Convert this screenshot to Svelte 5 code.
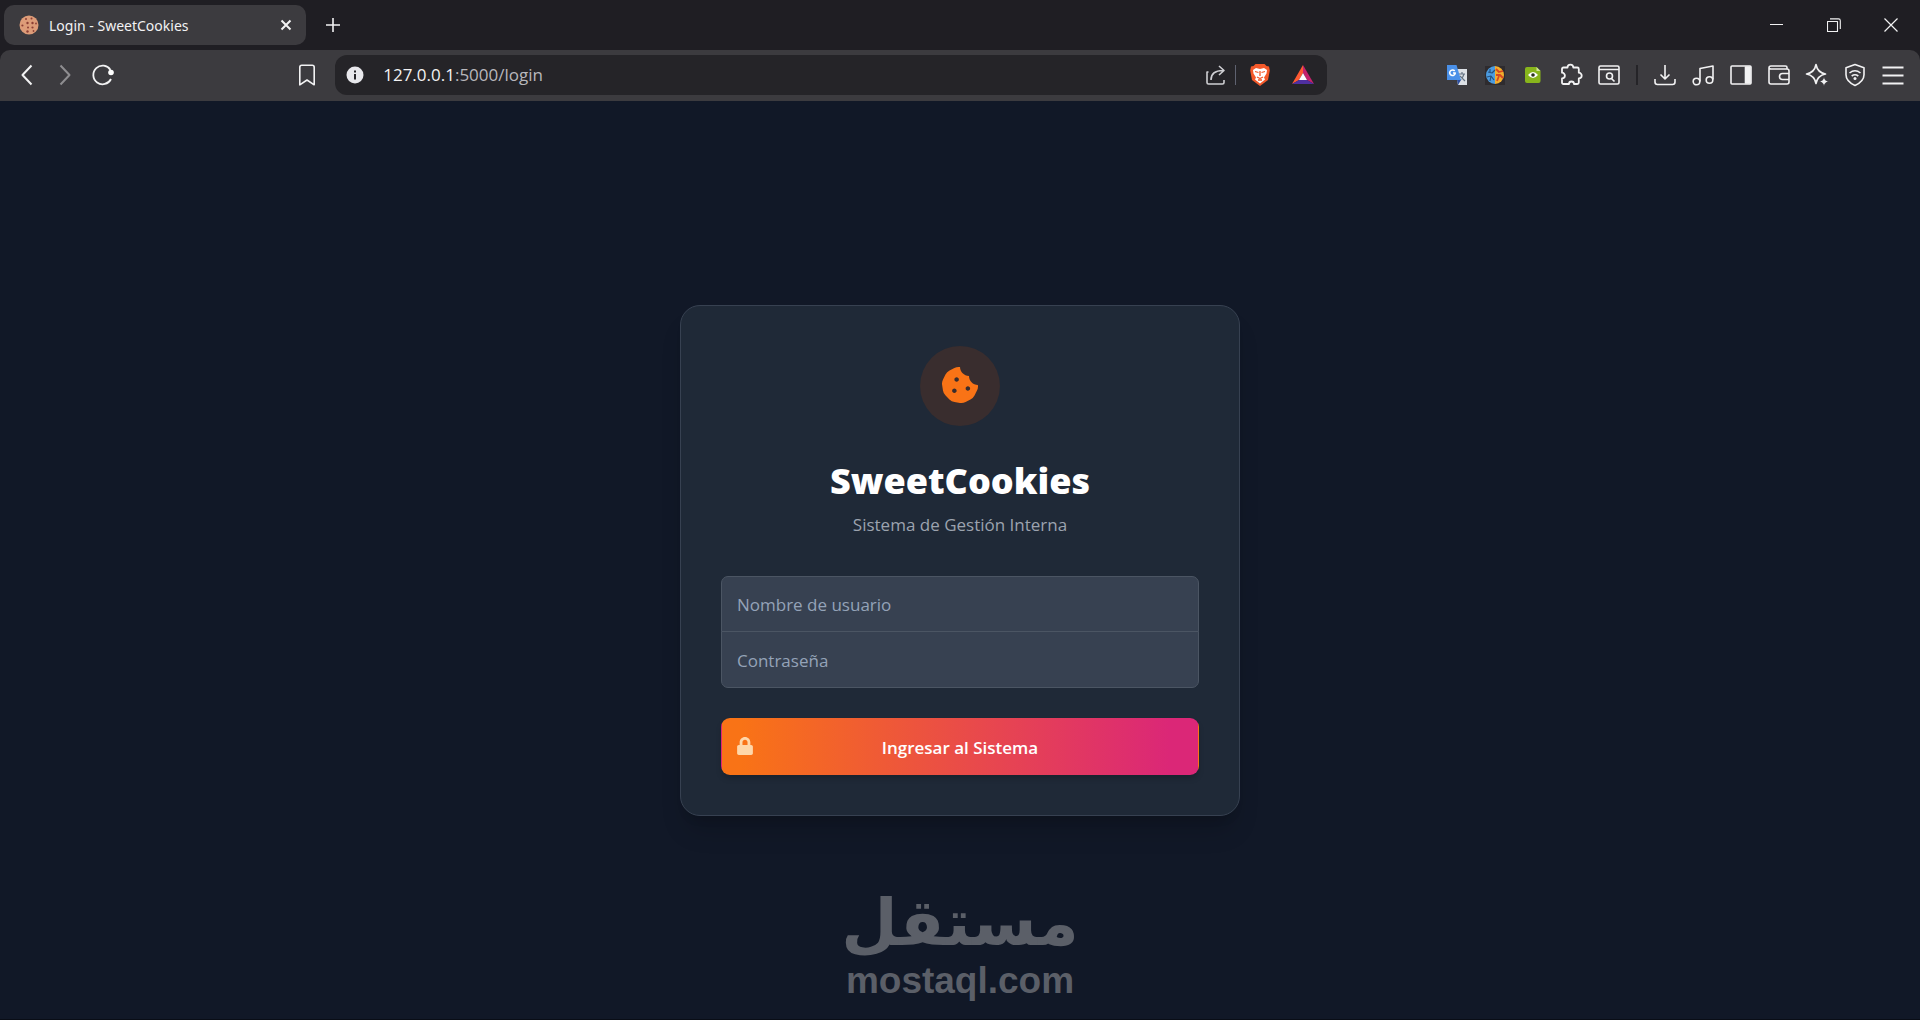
<script lang="ts">
	let username = $state( '' )
	let password = $state( '' )

	const submit = ( e: SubmitEvent ) => {
		e.preventDefault()
	}
</script>

<svelte:head>
	<title>Login - SweetCookies</title>
</svelte:head>

<div class="browser">
	<header>
		<div class="tabs">
			<div class="tab">
				<svg class="art" width="20" height="20" viewBox="0 0 20 20">
					<circle cx="10" cy="10" r="9.5" fill="#dd9c78" />
					<g fill="#8c3f34">
						<circle cx="7" cy="4" r="1" /><circle cx="12.5" cy="3.6" r="1" /><circle cx="8.5" cy="8" r="1.2" />
						<circle cx="13.5" cy="8" r="1.2" /><circle cx="3.4" cy="10.5" r="1.1" /><circle cx="9" cy="12.5" r="1" />
						<circle cx="13.5" cy="12.5" r="1.1" /><circle cx="17" cy="8.5" r=".9" /><circle cx="8.5" cy="16.5" r="1.2" /><circle cx="14.5" cy="16" r=".9" />
					</g>
				</svg>
				<span>Login - SweetCookies</span>
				<button class="close" aria-label="Close tab">
					<svg width="12" height="12" viewBox="0 0 12 12"><path d="M1.5 1.5l9 9M10.5 1.5l-9 9" stroke-width="2" /></svg>
				</button>
			</div>
			<button class="new" aria-label="New tab">
				<svg width="14" height="14" viewBox="0 0 14 14"><path d="M7 0v14M0 7h14" stroke-width="1.6" /></svg>
			</button>
			<div class="window">
				<button aria-label="Minimize"><svg width="14" height="14" viewBox="0 0 14 14"><path d="M0 6.5h13" stroke-width="1" /></svg></button>
				<button aria-label="Restore"><svg width="14" height="14" viewBox="0 0 14 14"><path d="M.5 3.5h10v10H.5zM3 .9h8.5q1.8 0 1.8 1.8V11" stroke-width="1.1" /></svg></button>
				<button aria-label="Close"><svg width="14" height="14" viewBox="0 0 14 14"><path d="M.5.5l13 13M13.5.5l-13 13" stroke-width="1.2" /></svg></button>
			</div>
		</div>

		<div class="toolbar">
			<button aria-label="Back"><svg width="24" height="24" viewBox="0 0 24 24"><path d="M16.5 2.5L7.5 12l9 9.5" stroke-width="2" /></svg></button>
			<button class="dim" aria-label="Forward"><svg width="24" height="24" viewBox="0 0 24 24"><path d="M7.5 2.5l9 9.5-9 9.5" stroke-width="2" /></svg></button>
			<button aria-label="Reload">
				<svg width="24" height="24" viewBox="0 0 24 24"><path d="M20 16A9.3 9.3 0 1 1 19.5 7" stroke-width="1.8" /><circle cx="20" cy="9.5" r="2.8" fill="#fff" stroke="none" /></svg>
			</button>
			<div class="space wide"></div>
			<button aria-label="Bookmark this page"><svg width="24" height="24" viewBox="0 0 24 24"><path d="M4.8 4.2q0-2 2-2h10.4q2 0 2 2v17.6L12 17l-7.2 4.8z" /></svg></button>
			<div class="address">
				<button class="info" aria-label="Site information">
					<svg width="18" height="18" viewBox="0 0 18 18"><circle cx="9" cy="9" r="8.5" fill="#e8e8ec" stroke="none" /><path d="M9 8v5.5M9 4.5v2" stroke="#252428" stroke-width="2" /></svg>
				</button>
				<p><b>127.0.0.1</b>:5000/login</p>
				<button aria-label="Share">
					<svg width="22" height="22" viewBox="0 0 22 22"><path d="M3.5 8H2v10.5q0 1.5 1.5 1.5h14q1.5 0 1.5-1.5V16M6 16c0-6 4-9.5 12-9.5M14 2l5 4.5L14 11" stroke="#cfcfd3" /></svg>
				</button>
				<i></i>
				<button aria-label="Brave Shields">
					<svg class="art" width="22" height="24" viewBox="0 0 22 24">
						<path d="M6.5 1h9l2 2 2.500.5.8 4-1.800 9.500L11 23 3 17 1.200 7.500l.8-4L4.500 3z" fill="#f4592a" />
						<path d="M4 7l3-2 4 1 4-1 3 2-.5 3.500-2.500 4 1 2-5 4-5-4 1-2-2.500-4z" fill="#fff" />
						<path d="M6 8.500l3.500 1M16 8.500l-3.500 1M11 8v5M8 14l3 1.500 3-1.500M9 17h4" stroke="#f4592a" stroke-width="1.3" />
					</svg>
				</button>
				<button class="rewards" aria-label="Brave Rewards">
					<svg class="art" width="24" height="24" viewBox="0 0 24 24">
						<path d="M12 2L1 21l7-4 4-7z" fill="#ff5a32" /><path d="M12 2l11 19-7-4-4-7z" fill="#c5236d" /><path d="M1 21l7-4h8l7 4z" fill="#4f2fa0" /><path d="M12 10l4 7H8z" fill="#fff" />
					</svg>
				</button>
			</div>
			<div class="space"></div>
			<button aria-label="Translate">
				<svg class="art" width="22" height="22" viewBox="0 0 22 22">
					<path d="M9 5h12v16h-9z" fill="#dde1e6" /><path d="M13 10h6M16 8v2M18 10c-1 4-3 5-4 6M14 12l5 5" stroke="#667483" stroke-width="1.2" />
					<path d="M1 1h9.5L15 16H1z" fill="#4a90e8" /><path d="M11 16h4l-3 5z" fill="#2c4ea0" />
					<path d="M8.7 7A2.8 2.8 0 1 0 9.3 9H7" stroke="#fff" stroke-width="1.6" />
				</svg>
			</button>
			<button aria-label="Brain extension">
				<svg class="art" width="22" height="22" viewBox="0 0 22 22">
					<path d="M1 2h20v19H1z" fill="#2e2b2e" /><path d="M11 2a9 9 0 0 0 0 18z" fill="#4b9be0" /><path d="M11 2a9 9 0 0 1 0 18z" fill="#f3ae2d" />
					<path d="M4 8l4 1 3-3M3 13l4-1 3 4M6 5v3M7 12l-1 5" stroke="#28517e" stroke-width="1.2" /><path d="M12 5l3 3 4-1M12 11h4l3 3M15 12l-2 5" stroke="#d84722" stroke-width="1.8" />
				</svg>
			</button>
			<button aria-label="Watcher extension">
				<svg class="art" width="18" height="18" viewBox="0 0 18 18"><path d="M3 1h9.5L16.5 5v10q0 2-2 2H3q-2 0-2-2V3q0-2 2-2z" fill="#88b51c" /><path d="M12.5 1v4h4z" fill="#d1e69a" /><path d="M4 9q5-6 10 0-5 6-10 0z" fill="#fff" /><circle cx="9" cy="9" r="1.8" fill="#29351b" /></svg>
			</button>
			<button aria-label="Extensions">
				<svg width="24" height="24" viewBox="0 0 24 24"><path d="M4.5 4.5h4a2.9 2.9 0 0 1 5.8 0h4q1.5 0 1.5 1.5v3.7a2.9 2.9 0 0 1 0 5.8v4q0 1.5-1.5 1.5H15a2.5 2.5 0 0 0-5 0H4.5Q3 21 3 19.5v-4a2.9 2.9 0 0 0 0-5.8V6q0-1.5 1.5-1.5z" stroke-width="1.8" /></svg>
			</button>
			<button aria-label="Search tabs">
				<svg width="24" height="24" viewBox="0 0 24 24"><rect x="2" y="3" width="20" height="18" rx="1.5" /><path d="M2 6.5h20M14.5 15.5l3 3" /><circle cx="12.5" cy="13" r="3" /></svg>
			</button>
			<hr />
			<button aria-label="Downloads"><svg width="24" height="24" viewBox="0 0 24 24"><path d="M12 2v14M7.5 11.5L12 16l4.5-4.5M2 16v3q0 2.5 2.5 2.5h15Q22 21.5 22 19v-3" /></svg></button>
			<button aria-label="Media"><svg width="24" height="24" viewBox="0 0 24 24"><path d="M9 18.5V5.5L22 3v13.5" /><circle cx="5.5" cy="18.5" r="3.3" /><circle cx="18.5" cy="17" r="3.3" /></svg></button>
			<button aria-label="Sidebar"><svg width="24" height="24" viewBox="0 0 24 24"><rect x="2" y="3" width="20" height="18" rx="1" /><path d="M16.5 4H21v16h-4.5z" fill="#f2f2f3" /></svg></button>
			<button aria-label="Wallet"><svg width="24" height="24" viewBox="0 0 24 24"><path d="M20 6V4.5Q20 3 18.5 3H4Q2 3 2 5v14q0 2 2 2h16q2 0 2-2V8q0-2-2-2H4Q2 6 2 4.8M22 10.5h-6.5q-3 0-3 3t3 3H22" /></svg></button>
			<button aria-label="Leo AI"><svg width="24" height="24" viewBox="0 0 24 24"><path d="M11 1.5q1.5 8 9.5 9.5-8 1.5-9.5 9.5-1.5-8-9.5-9.5 8-1.5 9.5-9.5z" /><path d="M19 14q.8 4 4.5 4.5Q19.8 19.3 19 23q-.8-3.7-4.5-4.5Q18.2 18 19 14z" fill="#f2f2f3" stroke="#3c3b3f" stroke-width=".6" /></svg></button>
			<button aria-label="VPN"><svg width="24" height="24" viewBox="0 0 24 24"><path d="M12 1.5l9 3.2v7q0 6.5-9 10.8-9-4.3-9-10.8v-7zM6.5 10q5.5-4.5 11 0M8.7 13q3.3-2.5 6.6 0" /><circle cx="12" cy="15.5" r="1.5" fill="#f2f2f3" stroke="none" /></svg></button>
			<button aria-label="Menu"><svg width="24" height="24" viewBox="0 0 24 24"><path d="M1.5 4.5h21M1.5 12.5h21M1.5 20.5h21" stroke-width="1.8" /></svg></button>
		</div>
	</header>

	<main>
		<section class="card">
			<div class="logo">
				<svg width="36" height="36" viewBox="0 0 512 512"><path fill="#f97316" d="M510.52 255.82c-69.97-.85-126.47-57.69-126.47-127.86-70.17 0-127-56.49-127.86-126.45-27.26-4.14-55.13.3-79.72 12.82l-69.13 35.22a132.221 132.221 0 0 0-57.79 57.81l-35.1 68.88a132.645 132.645 0 0 0-12.82 80.95l12.08 76.27a132.521 132.521 0 0 0 37.16 72.96l54.77 54.76a132.036 132.036 0 0 0 72.71 37.06l76.71 12.15c27.51 4.36 55.7-.11 80.53-12.76l69.13-35.21a132.273 132.273 0 0 0 57.79-57.81l35.1-68.88c12.56-24.64 17.01-52.58 12.91-79.91zM176 368c-17.67 0-32-14.33-32-32s14.33-32 32-32 32 14.33 32 32-14.33 32-32 32zm32-160c-17.67 0-32-14.33-32-32s14.33-32 32-32 32 14.33 32 32-14.33 32-32 32zm160 128c-17.67 0-32-14.33-32-32s14.33-32 32-32 32 14.33 32 32-14.33 32-32 32z" /></svg>
			</div>
			<h1>SweetCookies</h1>
			<p class="subtitle">Sistema de Gestión Interna</p>
			<form onsubmit={ submit }>
				<input bind:value={ username } type="text" placeholder="Nombre de usuario" aria-label="Nombre de usuario" />
				<input bind:value={ password } type="password" placeholder="Contraseña" aria-label="Contraseña" />
				<button class="submit">
					<svg width="16" height="18" viewBox="0 0 448 512"><path fill="#fed7aa" d="M400 224h-24v-72C376 68.2 307.8 0 224 0S72 68.2 72 152v72H48c-26.5 0-48 21.5-48 48v192c0 26.5 21.5 48 48 48h352c26.5 0 48-21.5 48-48V272c0-26.5-21.5-48-48-48zm-104 0H152v-72c0-39.7 32.3-72 72-72s72 32.3 72 72v72z" /></svg>
					<span>Ingresar al Sistema</span>
				</button>
			</form>
		</section>
		<div class="mark">
			<strong lang="ar" dir="rtl">مستقل</strong>
			<span>mostaql.com</span>
		</div>
	</main>
</div>

<style>
:global(body) {
	margin: 0;
	background: #111827;
}
.browser {
	display: flex;
	flex-direction: column;
	min-height: 100vh;
	font-family: "Open Sans", "Noto Sans", sans-serif;
}
button {
	display: flex;
	align-items: center;
	justify-content: center;
	padding: 0;
	border: 0;
	background: none;
	font-family: inherit;
}
header {
	background: #1f1e23;
	color: #f2f2f3;
}
header svg {
	display: block;
	flex: none;
	fill: none;
	stroke: #f2f2f3;
	stroke-width: 1.6;
	stroke-linejoin: round;
}
header .art {
	stroke: none;
}
.tabs {
	display: flex;
	align-items: center;
	height: 50px;
	padding: 0 1px 0 4px;
}
.tab {
	display: flex;
	align-items: center;
	gap: 10px;
	box-sizing: border-box;
	width: 302px;
	height: 40px;
	padding: 0 14px 0 15px;
	border-radius: 10px;
	background: #3c3b3f;
	font-family: "Noto Sans", sans-serif;
	font-size: 14px;
}
.tab span {
	flex: 1;
}
.new {
	width: 40px;
	height: 40px;
	margin-left: 7px;
}
.window {
	display: flex;
	margin-left: auto;
}
.window button {
	width: 57px;
	height: 50px;
}
.toolbar {
	display: flex;
	align-items: center;
	box-sizing: border-box;
	height: 51px;
	padding: 0 8px 1px;
	border-radius: 10px 10px 0 0;
	background: #3c3b3f;
}
.toolbar button {
	flex: none;
	width: 38px;
	height: 38px;
}
.dim {
	opacity: .45;
}
.space {
	flex: 2 1 0;
}
.wide {
	flex-grow: 3;
}
.address {
	display: flex;
	align-items: center;
	flex: 0 1 992px;
	box-sizing: border-box;
	min-width: 0;
	height: 40px;
	margin-left: 9px;
	padding: 0 5px 0 1px;
	border-radius: 12px;
	background: #252428;
}
.address p {
	flex: 1;
	margin: 0 0 0 9px;
	color: #b8b7bc;
	font-size: 17px;
	line-height: 24px;
}
.address b {
	color: #f2f2f3;
	font-weight: 400;
}
.address i {
	width: 1px;
	height: 20px;
	margin-right: 5px;
	background: #5f6270;
}
.address .rewards {
	margin-left: 5px;
}
hr {
	flex: none;
	width: 2px;
	height: 20px;
	margin: 0 8px;
	border: 0;
	background: #252428;
}
main {
	position: relative;
	display: flex;
	flex: 1;
	align-items: center;
	justify-content: center;
	border-bottom: 1px solid #090d16;
	background: #111827;
}
.card {
	display: flex;
	flex-direction: column;
	align-items: center;
	box-sizing: border-box;
	width: 100%;
	max-width: 560px;
	padding: 40px;
	border: 1px solid #374151;
	border-radius: 20px;
	background: #1f2937;
	box-shadow: 0 20px 25px -5px rgba(0, 0, 0, .15), 0 8px 10px -6px rgba(0, 0, 0, .15);
}
.logo {
	display: flex;
	align-items: center;
	justify-content: center;
	width: 80px;
	height: 80px;
	border-radius: 50%;
	background: #392d2e;
}
.logo svg {
	margin-bottom: 2px;
}
h1 {
	margin: 30px 0 0;
	color: #fff;
	font-size: 36px;
	font-weight: 800;
	line-height: 50px;
}
.subtitle {
	margin: 6px 0 0;
	color: #9ca3af;
	font-size: 17px;
	line-height: 26px;
}
form {
	display: flex;
	flex-direction: column;
	width: 100%;
	margin-top: 38px;
}
input {
	box-sizing: border-box;
	width: 100%;
	height: 56px;
	padding: 2px 15px 0;
	border: 1px solid #4b5563;
	border-radius: 7px 7px 0 0;
	outline: 0;
	background: #374151;
	color: #fff;
	font-family: inherit;
	font-size: 17px;
}
input + input {
	height: 57px;
	margin-top: -1px;
	border-radius: 0 0 7px 7px;
}
input::placeholder {
	color: #94a3b8;
	opacity: 1;
}
.submit {
	display: grid;
	grid-template-columns: 1fr auto 1fr;
	height: 57px;
	margin-top: 30px;
	padding: 0 15px;
	border: 1px solid transparent;
	border-radius: 9px;
	background: linear-gradient(to right, #f97316 4%, #db2777 94%);
	box-shadow: 0 4px 6px -1px rgba(0, 0, 0, .2);
	color: #fff;
	font-size: 17px;
	font-weight: 600;
}
.submit span {
	padding-top: 2px;
}
.mark {
	position: absolute;
	bottom: 18px;
	left: 50%;
	display: flex;
	flex-direction: column;
	align-items: center;
	transform: translateX(-50%);
	color: #5b5f68;
}
.mark strong {
	font-family: "DejaVu Sans", sans-serif;
	font-size: 65px;
	line-height: 76px;
}
.mark span {
	font-family: "Liberation Sans", sans-serif;
	font-size: 37px;
	font-weight: 700;
	line-height: 40px;
}
</style>
